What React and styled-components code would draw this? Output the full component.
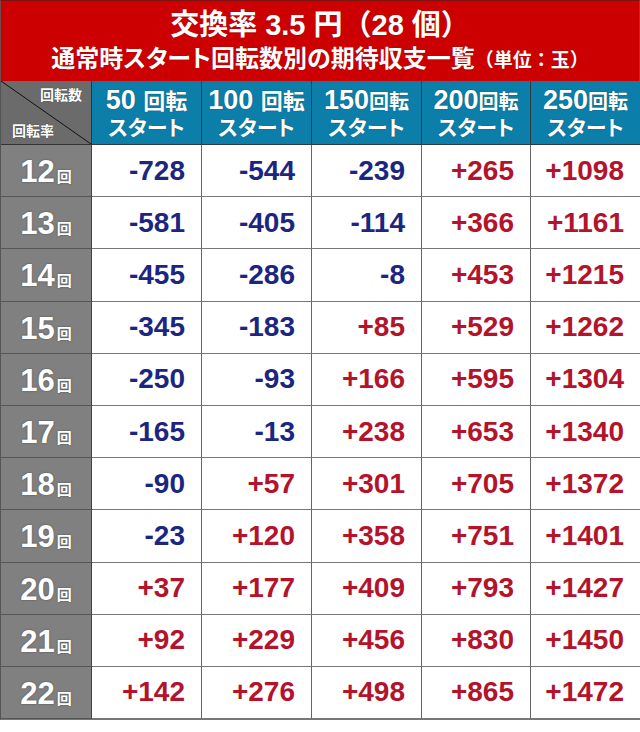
import { createGlobalStyle } from "styled-components"
import styled from "styled-components"

const GlobalStyle = createGlobalStyle`
  body {
    margin: 0;
    background: #ffffff;
    font-family: "Liberation Sans", "Noto Sans CJK JP", sans-serif;
  }
`

const Wrapper = styled.div`
  width: 640px;
  box-sizing: border-box;
`

const Header = styled.div`
  height: 81px;
  box-sizing: border-box;
  background: #cc0000;
  border-top: 1px solid #7d1414;
  border-left: 1px solid #6f4a4a;
  border-right: 1px solid #6f4a4a;
  display: flex;
  flex-direction: column;
  align-items: center;
  color: #fff;
  font-weight: bold;
`

const Title = styled.div`
  font-size: 29px;
  line-height: 34px;
  margin-top: 7px;
  text-shadow: 0 0 1px rgba(0, 0, 0, 0.4);
`

const SubTitle = styled.div`
  font-size: 24px;
  line-height: 30px;
  margin-top: 2px;
  font-feature-settings: "palt";
  text-shadow: 0 0 1px rgba(0, 0, 0, 0.4);
`

const Small = styled.span`
  font-size: ${(p) => p.$size}px;
  font-feature-settings: normal;
`

const Table = styled.div`
  display: grid;
  grid-template-columns: 91px 110px 110px 110px 109px 110px;
  grid-template-rows: 64px repeat(11, 52.2px);
  border-left: 1px solid #555;
  border-bottom: 1px solid #777;
`

const Corner = styled.div`
  position: relative;
  background: #6b6b6b;
  border-right: 1px solid #333;
  border-bottom: 1px solid #333;
  box-sizing: border-box;
  color: #fff;
  font-weight: bold;
  font-size: 14px;
  text-shadow: 0 0 1px rgba(0, 0, 0, 0.6);
  display: flex;
  flex-direction: column;
  justify-content: space-between;
  padding: 3px 9px 4px 11px;
`

const Diagonal = styled.svg`
  position: absolute;
  inset: 0;
  width: 100%;
  height: 100%;
`

const CornerTop = styled.div`
  align-self: flex-end;
  position: relative;
`

const CornerBottom = styled.div`
  align-self: flex-start;
  position: relative;
`

const ColHead = styled.div`
  background: #0b7eaa;
  border-right: 1px solid #2b3a44;
  border-bottom: 1px solid #2b3a44;
  box-sizing: border-box;
  color: #fff;
  font-weight: bold;
  display: flex;
  flex-direction: column;
  align-items: center;
  justify-content: center;
  text-shadow: 0 0 1px rgba(0, 0, 0, 0.5);
  font-feature-settings: "palt";
`

const HeadTop = styled.div`
  font-size: 27px;
  line-height: 30px;
  white-space: pre;
`

const HeadUnit = styled.span`
  font-size: ${(p) => p.$size}px;
`

const HeadBottom = styled.div`
  font-size: 21px;
  line-height: 24px;
  margin-top: -1px;
`

const RowLabel = styled.div`
  background: #808080;
  border-right: 1px solid #444;
  border-bottom: 1px solid #555;
  box-sizing: border-box;
  color: #fff;
  font-weight: bold;
  display: flex;
  align-items: baseline;
  justify-content: center;
  padding-top: 7px;
  text-shadow: 0 0 2px rgba(0, 0, 0, 0.45);
`

const LabelNum = styled.span`
  font-size: 31px;
  line-height: 40px;
`

const LabelUnit = styled.span`
  font-size: 15px;
  margin-left: 2px;
`

const Cell = styled.div`
  background: #fff;
  border-right: 1px solid #666;
  border-bottom: 1px solid #777;
  box-sizing: border-box;
  display: flex;
  align-items: center;
  justify-content: flex-end;
  padding-right: 16px;
  font-size: 28px;
  font-weight: bold;
  color: ${(p) => (p.$plus ? "#b3132b" : "#1c2681")};
`

const cols = [
  { num: "50", gap: " ", unit: 22 },
  { num: "100", gap: " ", unit: 22 },
  { num: "150", gap: "", unit: 20 },
  { num: "200", gap: "", unit: 20 },
  { num: "250", gap: "", unit: 20 },
]

const rows = [
  [12, -728, -544, -239, 265, 1098],
  [13, -581, -405, -114, 366, 1161],
  [14, -455, -286, -8, 453, 1215],
  [15, -345, -183, 85, 529, 1262],
  [16, -250, -93, 166, 595, 1304],
  [17, -165, -13, 238, 653, 1340],
  [18, -90, 57, 301, 705, 1372],
  [19, -23, 120, 358, 751, 1401],
  [20, 37, 177, 409, 793, 1427],
  [21, 92, 229, 456, 830, 1450],
  [22, 142, 276, 498, 865, 1472],
]

export default function App() {
  return (
    <>
      <GlobalStyle />
      <Wrapper>
        <Header>
          <Title>交換率 3.5 円（28 個）</Title>
          <SubTitle>
            通常時スタート回転数別の期待収支一覧<Small $size={19}>（単位：玉）</Small>
          </SubTitle>
        </Header>
        <Table>
          <Corner>
            <Diagonal viewBox="0 0 90 63" preserveAspectRatio="none">
              <line x1="0" y1="0" x2="90" y2="63" stroke="#111" strokeWidth="1" />
            </Diagonal>
            <CornerTop>回転数</CornerTop>
            <CornerBottom>回転率</CornerBottom>
          </Corner>
          {cols.map((c) => (
            <ColHead key={c.num}>
              <HeadTop>
                {c.num}
                {c.gap}
                <HeadUnit $size={c.unit}>回転</HeadUnit>
              </HeadTop>
              <HeadBottom>スタート</HeadBottom>
            </ColHead>
          ))}
          {rows.map(([label, ...vals]) => (
            <>
              <RowLabel key={"l" + label}>
                <LabelNum>{label}</LabelNum>
                <LabelUnit>回</LabelUnit>
              </RowLabel>
              {vals.map((v, i) => (
                <Cell key={label + "-" + i} $plus={v > 0}>
                  {v > 0 ? "+" + v : v}
                </Cell>
              ))}
            </>
          ))}
        </Table>
      </Wrapper>
    </>
  )
}
